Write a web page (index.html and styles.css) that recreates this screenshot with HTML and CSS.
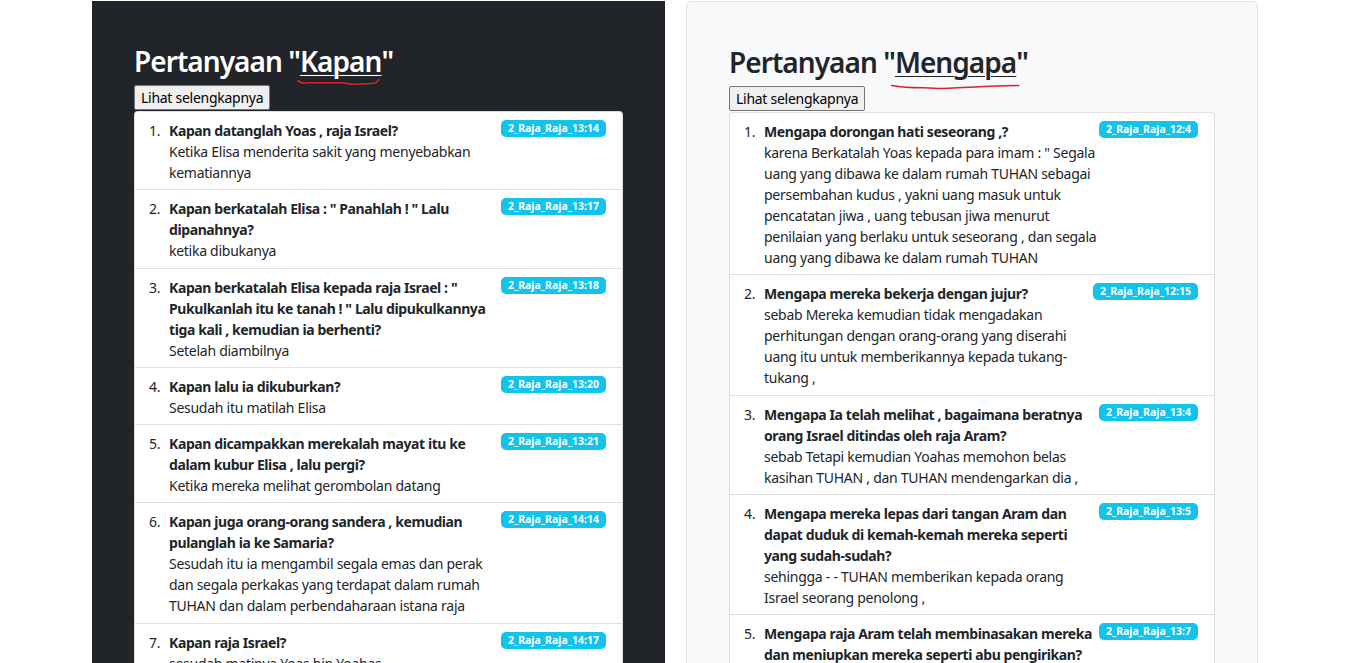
FILE: index.html
```html
<!DOCTYPE html>
<html lang="id">
<head>
<meta charset="utf-8">
<title>Pertanyaan</title>
<link rel="stylesheet" href="styles.css">
</head>
<body>
<div class="page">
  <section class="panel panel-dark">
    <h2 class="title">Pertanyaan "<span class="mark">Kapan<svg class="squiggle squiggle-kapan" viewBox="0 0 90 8" preserveAspectRatio="none"><path d="M1 2 C4 6 8 6 12 5 L48 5 C53 5 54 7 60 7 L80 6 C84 6 86 5 88 1" fill="none" stroke="#d9232a" stroke-width="2" stroke-linecap="round"/></svg></span>"</h2>
    <button class="more">Lihat selengkapnya</button>
    <ol class="list">
      <li class="item"><span class="num">1.</span><div class="body"><div class="q">Kapan datanglah Yoas , raja Israel?</div>Ketika Elisa menderita sakit yang menyebabkan kematiannya</div><span class="badge">2_Raja_Raja_13:14</span></li>
      <li class="item"><span class="num">2.</span><div class="body"><div class="q">Kapan berkatalah Elisa : " Panahlah ! " Lalu dipanahnya?</div>ketika dibukanya</div><span class="badge">2_Raja_Raja_13:17</span></li>
      <li class="item"><span class="num">3.</span><div class="body"><div class="q">Kapan berkatalah Elisa kepada raja Israel : " Pukulkanlah itu ke tanah ! " Lalu dipukulkannya tiga kali , kemudian ia berhenti?</div>Setelah diambilnya</div><span class="badge">2_Raja_Raja_13:18</span></li>
      <li class="item"><span class="num">4.</span><div class="body"><div class="q">Kapan lalu ia dikuburkan?</div>Sesudah itu matilah Elisa</div><span class="badge">2_Raja_Raja_13:20</span></li>
      <li class="item"><span class="num">5.</span><div class="body"><div class="q">Kapan dicampakkan merekalah mayat itu ke dalam kubur Elisa , lalu pergi?</div>Ketika mereka melihat gerombolan datang</div><span class="badge">2_Raja_Raja_13:21</span></li>
      <li class="item"><span class="num">6.</span><div class="body"><div class="q">Kapan juga orang-orang sandera , kemudian pulanglah ia ke Samaria?</div>Sesudah itu ia mengambil segala emas dan perak dan segala perkakas yang terdapat dalam rumah TUHAN dan dalam perbendaharaan istana raja</div><span class="badge">2_Raja_Raja_14:14</span></li>
      <li class="item"><span class="num">7.</span><div class="body"><div class="q">Kapan raja Israel?</div>sesudah matinya Yoas bin Yoahas</div><span class="badge">2_Raja_Raja_14:17</span></li>
    </ol>
  </section>
  <section class="panel panel-light">
    <h2 class="title">Pertanyaan "<span class="mark">Mengapa<svg class="squiggle squiggle-mengapa" viewBox="0 0 140 8" preserveAspectRatio="none"><path d="M1 2 C10 4 20 5 35 5 C45 5 48 6 56 6 C75 5 100 3 138 2" fill="none" stroke="#d9232a" stroke-width="2" stroke-linecap="round"/></svg></span>"</h2>
    <button class="more">Lihat selengkapnya</button>
    <ol class="list">
      <li class="item"><span class="num">1.</span><div class="body"><div class="q">Mengapa dorongan hati seseorang ,?</div>karena Berkatalah Yoas kepada para imam : " Segala uang yang dibawa ke dalam rumah TUHAN sebagai persembahan kudus , yakni uang masuk untuk pencatatan jiwa , uang tebusan jiwa menurut<br>penilaian yang berlaku untuk seseorang , dan segala uang yang dibawa ke dalam rumah TUHAN</div><span class="badge">2_Raja_Raja_12:4</span></li>
      <li class="item"><span class="num">2.</span><div class="body"><div class="q">Mengapa mereka bekerja dengan jujur?</div>sebab Mereka kemudian tidak mengadakan perhitungan dengan orang-orang yang diserahi uang itu untuk memberikannya kepada tukang-tukang ,</div><span class="badge">2_Raja_Raja_12:15</span></li>
      <li class="item"><span class="num">3.</span><div class="body"><div class="q">Mengapa Ia telah melihat , bagaimana beratnya orang Israel ditindas oleh raja Aram?</div>sebab Tetapi kemudian Yoahas memohon belas kasihan TUHAN , dan TUHAN mendengarkan dia ,</div><span class="badge">2_Raja_Raja_13:4</span></li>
      <li class="item"><span class="num">4.</span><div class="body"><div class="q">Mengapa mereka lepas dari tangan Aram dan dapat duduk di kemah-kemah mereka seperti yang sudah-sudah?</div>sehingga - - TUHAN memberikan kepada orang Israel seorang penolong ,</div><span class="badge">2_Raja_Raja_13:5</span></li>
      <li class="item"><span class="num">5.</span><div class="body"><div class="q">Mengapa raja Aram telah membinasakan mereka dan meniupkan mereka seperti abu pengirikan?</div>sebab tidak ada lagi tentara yang ditinggalkan bagi Yoahas</div><span class="badge">2_Raja_Raja_13:7</span></li>
    </ol>
  </section>
</div>
</body>
</html>
```

FILE: styles.css
```css
* { box-sizing: border-box; }

html, body {
  margin: 0;
  padding: 0;
  background: #ffffff;
}

body {
  font-family: "Noto Sans", "Open Sans", sans-serif;
  font-size: 14px;
  line-height: 21px;
  color: #212529;
  letter-spacing: -0.27px;
}

.page {
  width: 1166px;
  margin: 1px auto 0;
  display: flex;
  gap: 21px;
  align-items: flex-start;
}

.panel {
  flex: 0 0 auto;
  padding: 42px;
  min-height: 700px;
}

.panel-dark {
  width: 573px;
  background: #212529;
  color: #ffffff;
}

.panel-light {
  width: 572px;
  background: #f8f9fa;
  border: 1px solid #dee2e6;
  border-radius: 5px;
}

.title {
  margin: 1px 0 7px;
  font-size: 28px;
  line-height: 34px;
  font-weight: 600;
  letter-spacing: -0.95px;
}

.mark {
  position: relative;
  text-decoration: underline;
  text-decoration-thickness: 1px;
  text-underline-offset: 3px;
}

.squiggle {
  position: absolute;
  height: 6px;
  overflow: visible;
}

.squiggle-kapan {
  left: -3px;
  width: calc(100% + 2px);
  bottom: -5px;
}

.squiggle-mengapa {
  left: -4px;
  width: calc(100% + 8px);
  bottom: -9px;
}

.more {
  display: block;
  font-family: "Noto Sans", "Open Sans", sans-serif;
  font-size: 14px;
  letter-spacing: -0.27px;
  line-height: 19px;
  padding: 2px 6px;
  color: #000000;
  background: #efefef;
  border: 1px solid #767676;
  border-radius: 2px;
}

.list {
  list-style: none;
  margin: 1px 0 0;
  padding: 0;
  background: #ffffff;
  border: 1px solid rgba(0, 0, 0, 0.125);
  border-radius: 4px;
  color: #212529;
}

.item {
  display: flex;
  align-items: flex-start;
  padding: 8px 16px 6.3px 14px;
  border-top: 1px solid rgba(0, 0, 0, 0.125);
}

.item:first-child {
  border-top: 0;
}

.num {
  flex: 0 0 auto;
  width: 20px;
}

.body {
  flex: 1 1 auto;
  min-width: 0;
}

.q {
  font-weight: 700;
  letter-spacing: -0.4px;
}

.badge {
  flex: 0 0 auto;
  padding: 0 7px;
  height: 17px;
  line-height: 17px;
  font-size: 10.5px;
  font-weight: 700;
  letter-spacing: 0;
  color: #ffffff;
  background: #12c3ec;
  border-radius: 5px;
  white-space: nowrap;
}
```
